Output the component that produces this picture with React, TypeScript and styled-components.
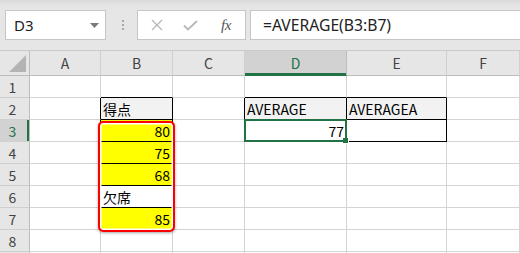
import React from 'react';
import styled, { createGlobalStyle } from 'styled-components';

const GlobalStyle = createGlobalStyle`
  * { box-sizing: border-box; }
  html, body { margin: 0; padding: 0; background: #ffffff; }
  body { overflow: hidden; }
`;

const GREEN = '#217346';
const GRID = '#d4d4d4';
const CELL_FONT = `"Noto Sans CJK JP", "Noto Sans", sans-serif`;
const UI_FONT = `"Noto Sans", "Noto Sans CJK JP", sans-serif`;

const Window = styled.div`
  width: 520px;
  height: 253px;
  overflow: hidden;
  display: flex;
  flex-direction: column;
  background: #fff;
`;

const Toolbar = styled.div`
  flex: none;
  height: 51px;
  display: flex;
  align-items: flex-start;
  padding: 10px 0 0 5px;
  background: linear-gradient(#d8d8d8 0px, #e3e3e3 4px, #e6e6e6 9px);
  border-bottom: 1px solid #cacaca;
`;

const NameBox = styled.div`
  flex: none;
  width: 101px;
  height: 30px;
  background: #fff;
  border: 1px solid #c6c6c6;
  display: flex;
  align-items: center;
  justify-content: space-between;
  padding: 0 6px 0 8px;
  font: 15px ${UI_FONT};
  color: #222;
`;

const Grip = styled.div`
  flex: none;
  margin: 10px 0 0 16px;
  display: flex;
  flex-direction: column;
  gap: 2px;
`;

const GripDot = styled.span`
  width: 2px;
  height: 2px;
  background: #a8a8a8;
`;

const FxBox = styled.div`
  flex: none;
  margin-left: 13px;
  width: 109px;
  height: 30px;
  background: #fff;
  border: 1px solid #c6c6c6;
  display: flex;
  align-items: center;
  padding: 0 8px 0 12px;
`;

const FxSlot = styled.span<{ $w: number }>`
  width: ${p => p.$w}px;
  display: flex;
  align-items: center;
  justify-content: center;
`;

const FxText = styled.span`
  font: italic 15px "Liberation Serif", serif;
  color: #555;
  letter-spacing: -0.5px;
`;

const FormulaInput = styled.div`
  flex: 1;
  margin: 0 -3px 0 4px;
  height: 30px;
  background: #fff;
  border: 1px solid #c6c6c6;
  display: flex;
  align-items: center;
  padding-left: 12px;
  font: 15.7px ${UI_FONT};
  color: #222;
`;

const Sheet = styled.div`
  display: grid;
  grid-template-columns: 30px 71px 72px 72px 102px 100px 73px;
  grid-template-rows: 25px repeat(9, 22px);
`;

type Pos = { $c: number; $r: number };

const Placed = styled.div<Pos>`
  grid-column: ${p => p.$c} / span 1;
  grid-row: ${p => p.$r} / span 1;
`;

const Corner = styled(Placed)`
  background: #e6e6e6;
  border-right: 1px solid #bdbdbd;
  border-bottom: 1px solid #bdbdbd;
  display: flex;
  align-items: flex-end;
  justify-content: flex-end;
  padding: 0 3px 3px 0;
`;

const ColHeader = styled(Placed)<{ $sel?: boolean }>`
  background: ${p => (p.$sel ? '#d2d2d2' : '#e6e6e6')};
  border-right: 1px solid ${p => (p.$sel ? '#bdbdbd' : '#d0d0d0')};
  border-bottom: 1px solid ${p => (p.$sel ? GREEN : '#bdbdbd')};
  box-shadow: ${p => (p.$sel ? `inset 0 -2px 0 ${GREEN}` : 'none')};
  display: flex;
  align-items: center;
  justify-content: center;
  padding-bottom: 1px;
  font: 14px ${CELL_FONT};
  color: ${p => (p.$sel ? GREEN : '#444')};
`;

const RowHeader = styled(Placed)<{ $sel?: boolean }>`
  background: ${p => (p.$sel ? '#d2d2d2' : '#e6e6e6')};
  border-right: 1px solid #bdbdbd;
  border-bottom: 1px solid #cfcfcf;
  box-shadow: ${p => (p.$sel ? `inset -2px 0 0 ${GREEN}` : 'none')};
  display: flex;
  align-items: center;
  justify-content: center;
  padding-right: 4px;
  font: 14px ${CELL_FONT};
  color: ${p => (p.$sel ? GREEN : '#444')};
`;

const Cell = styled(Placed)<{ $bg: string; $right: string; $bottom: string; $num: boolean }>`
  position: relative;
  background: ${p => p.$bg};
  border-right: 1px solid ${p => p.$right};
  border-bottom: 1px solid ${p => p.$bottom};
  display: flex;
  align-items: center;
  justify-content: ${p => (p.$num ? 'flex-end' : 'flex-start')};
  padding: 1px 2px 0 2px;
  font: 14px ${CELL_FONT};
  color: #000;
  white-space: nowrap;
`;

const Selection = styled.div`
  position: absolute;
  top: -1px;
  left: -1px;
  right: -1px;
  bottom: -1px;
  border: 2px solid ${GREEN};
  pointer-events: none;
  z-index: 3;
`;

const FillHandle = styled.div`
  position: absolute;
  right: -4px;
  bottom: -4px;
  width: 6px;
  height: 6px;
  background: ${GREEN};
  border: 1px solid #fff;
  border-width: 0 1px 1px 0;
  z-index: 4;
`;

const Callout = styled.div`
  grid-column: 3 / 4;
  grid-row: 4 / 9;
  margin: 1px -2px -2px -3px;
  border: 2px solid #ff0000;
  border-radius: 5px;
  box-shadow: inset 0 0 0 1.5px #ffffff, 0 1px 3px rgba(0, 0, 0, 0.35);
  pointer-events: none;
  z-index: 2;
`;

type CellData = { v: string; bg?: string; num?: boolean; box?: boolean };

const COLS = ['A', 'B', 'C', 'D', 'E', 'F'];
const ROWS = [1, 2, 3, 4, 5, 6, 7, 8, 9];
const VISIBLE_ROW_LABELS = 8;
const YELLOW = '#ffff00';
const HEAD = '#f2f2f2';

const data: Record<string, CellData> = {
  B2: { v: '得点', bg: HEAD, box: true },
  B3: { v: '80', bg: YELLOW, num: true, box: true },
  B4: { v: '75', bg: YELLOW, num: true, box: true },
  B5: { v: '68', bg: YELLOW, num: true, box: true },
  B6: { v: '欠席', box: true },
  B7: { v: '85', bg: YELLOW, num: true, box: true },
  D2: { v: 'AVERAGE', bg: HEAD, box: true },
  E2: { v: 'AVERAGEA', bg: HEAD, box: true },
  D3: { v: '77', num: true, box: true },
  E3: { v: '', box: true },
};

const boxed = (c: number, r: number) => {
  if (c < 0 || c >= COLS.length) return false;
  return !!data[`${COLS[c]}${r}`]?.box;
};

const Cross = () => (
  <svg width="12" height="12" viewBox="0 0 12 12">
    <path d="M1 1 L11 11 M11 1 L1 11" stroke="#b8b8b8" strokeWidth="1.4" fill="none" />
  </svg>
);

const Check = () => (
  <svg width="15" height="11" viewBox="0 0 15 11">
    <path d="M1 5.5 L5 9.5 L14 1" stroke="#b8b8b8" strokeWidth="1.8" fill="none" />
  </svg>
);

const Caret = () => (
  <svg width="9" height="5" viewBox="0 0 9 5">
    <path d="M0 0 H9 L4.5 5 Z" fill="#7a7a7a" />
  </svg>
);

const CornerMark = () => (
  <svg width="17" height="17" viewBox="0 0 17 17">
    <path d="M0 17 H17 V0 Z" fill="#b4b4b4" />
  </svg>
);

export default function App() {
  return (
    <>
      <GlobalStyle />
      <Window>
        <Toolbar>
          <NameBox>
            <span>D3</span>
            <Caret />
          </NameBox>
          <Grip>
            <GripDot />
            <GripDot />
            <GripDot />
          </Grip>
          <FxBox>
            <FxSlot $w={14}><Cross /></FxSlot>
            <FxSlot $w={52}><Check /></FxSlot>
            <FxSlot $w={20}><FxText>fx</FxText></FxSlot>
          </FxBox>
          <FormulaInput>=AVERAGE(B3:B7)</FormulaInput>
        </Toolbar>
        <Sheet>
          <Corner $c={1} $r={1}>
            <CornerMark />
          </Corner>
          {COLS.map((c, ci) => (
            <ColHeader key={c} $c={ci + 2} $r={1} $sel={c === 'D'}>{c}</ColHeader>
          ))}
          {ROWS.map(r => (
            <React.Fragment key={r}>
              <RowHeader $c={1} $r={r + 1} $sel={r === 3}>
                {r <= VISIBLE_ROW_LABELS ? r : null}
              </RowHeader>
              {COLS.map((c, ci) => {
                const d = data[`${c}${r}`];
                const right = boxed(ci, r) || boxed(ci + 1, r) ? '#000' : GRID;
                const bottom = boxed(ci, r) || boxed(ci, r + 1) ? '#000' : GRID;
                const sel = c === 'D' && r === 3;
                return (
                  <Cell
                    key={c}
                    $c={ci + 2}
                    $r={r + 1}
                    $bg={d?.bg ?? '#fff'}
                    $right={right}
                    $bottom={bottom}
                    $num={!!d?.num}
                  >
                    {d?.v}
                    {sel && (
                      <Selection>
                        <FillHandle />
                      </Selection>
                    )}
                  </Cell>
                );
              })}
            </React.Fragment>
          ))}
          <Callout />
        </Sheet>
      </Window>
    </>
  );
}
